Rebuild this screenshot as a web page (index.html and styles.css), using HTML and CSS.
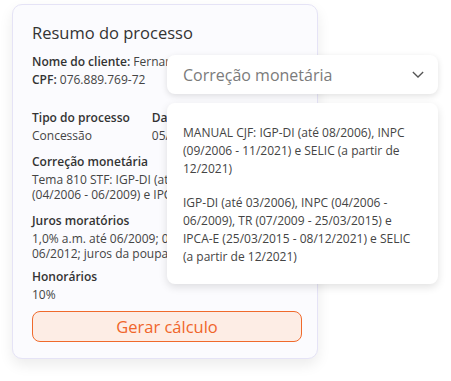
FILE: index.html
```html
<!DOCTYPE html>
<html>
<head>
    <title>Resumo do processo</title>
    <link rel="stylesheet" href="styles.css">
</head>
<body>
    <div class="card">
        <h1 class="card-title">Resumo do processo</h1>

        <div class="client-line"><span class="strong">Nome do cliente:</span> Fernanda Oliveira</div>
        <div class="client-line"><span class="strong">CPF:</span> 076.889.769-72</div>

        <div class="field-row">
            <div class="field">
                <div class="field-label">Tipo do processo</div>
                <div class="field-value">Concessão</div>
            </div>
            <div class="field">
                <div class="field-label">Data de início</div>
                <div class="field-value">05/03/2008</div>
            </div>
        </div>

        <div class="field">
            <div class="field-label">Correção monetária</div>
            <div class="field-value">Tema 810 STF: IGP-DI (até 03/2006), INPC (04/2006 - 06/2009) e IPCA-E</div>
        </div>

        <div class="field">
            <div class="field-label">Juros moratórios</div>
            <div class="field-value">1,0% a.m. até 06/2009; 0,5% a.m. de 07/2009 a 06/2012; juros da poupança desde então</div>
        </div>

        <div class="field field-last">
            <div class="field-label">Honorários</div>
            <div class="field-value">10%</div>
        </div>

        <button class="calc-button">Gerar cálculo</button>
    </div>

    <!-- dropdown aberto por cima do card -->
    <div class="select-box">
        <span class="select-placeholder">Correção monetária</span>
        <svg class="chevron" viewBox="0 0 14 8" xmlns="http://www.w3.org/2000/svg">
            <path d="M1 1l6 6 6-6"/>
        </svg>
    </div>
    <div class="select-options">
        <div class="select-option">MANUAL CJF: IGP-DI (até 08/2006), INPC (09/2006 - 11/2021) e SELIC (a partir de 12/2021)</div>
        <div class="select-option">IGP-DI (até 03/2006), INPC (04/2006 - 06/2009), TR (07/2009 - 25/03/2015) e IPCA-E (25/03/2015 - 08/12/2021) e SELIC (a partir de 12/2021)</div>
    </div>
</body>
</html>
```

FILE: styles.css
```css
body {
    margin: 0;
    background: #fff;
    font-family: 'Open Sans', 'Noto Sans', Arial, sans-serif;
    color: #3d3d3d;
    width: 451px;
    height: 381px;
    position: relative;
    overflow: hidden;
}
.card {
    margin: 4px 0 0 12px;
    width: 306px;
    box-sizing: border-box;
    background: #fbfbfe;
    border: 1px solid #e5e3f6;
    border-radius: 10px;
    box-shadow: 0 6px 14px rgba(0,0,0,0.08);
    padding: 17px 16px 16px 19px;
    display: flex;
    flex-direction: column;
}
.card-title {
    font-size: 16.5px;
    font-weight: 400;
    color: #333;
    margin: 0 0 9px 0;
    line-height: 22px;
}
.client-line {
    font-size: 12px;
    line-height: 18px;
    color: #444;
}
.strong {
    font-weight: 600;
    color: #333;
}
.field-row {
    display: flex;
    gap: 22px;
    margin-top: 10px;
}
.field {
    margin-top: 10px;
}
.field-last {
    margin-top: 7px;
}
.field-label {
    font-size: 12px;
    font-weight: 600;
    color: #333;
    line-height: 17px;
}
.field-value {
    font-size: 12px;
    line-height: 15px;
    margin-top: 2px;
    color: #444;
}
.calc-button {
    margin-top: 9px;
    height: 31px;
    width: 270px;
    border: 1px solid #f06a2c;
    border-radius: 8px;
    background: #fdede5;
    color: #f0652a;
    font-family: inherit;
    font-size: 16.5px;
}

/* Dropdown */
.select-box {
    position: absolute;
    left: 167px;
    top: 55px;
    width: 271px;
    height: 39px;
    box-sizing: border-box;
    background: #fff;
    border-radius: 8px;
    box-shadow: 0 2px 6px rgba(0,0,0,0.12);
    display: flex;
    align-items: center;
    justify-content: space-between;
    padding: 0 14px 0 16px;
}
.select-placeholder {
    font-size: 16px;
    color: #7b7b7b;
}
.chevron {
    width: 12px;
    height: 7px;
    fill: none;
    stroke: #555;
    stroke-width: 1.5;
}
.select-options {
    position: absolute;
    left: 167px;
    top: 103px;
    width: 271px;
    height: 181px;
    box-sizing: border-box;
    background: #fff;
    border-radius: 8px;
    box-shadow: 0 3px 8px rgba(0,0,0,0.12);
    padding: 13px 0 8px 0;
}
.select-option {
    font-size: 12px;
    line-height: 18px;
    color: #444;
    padding: 8px 24px 8px 16px;
}
```
